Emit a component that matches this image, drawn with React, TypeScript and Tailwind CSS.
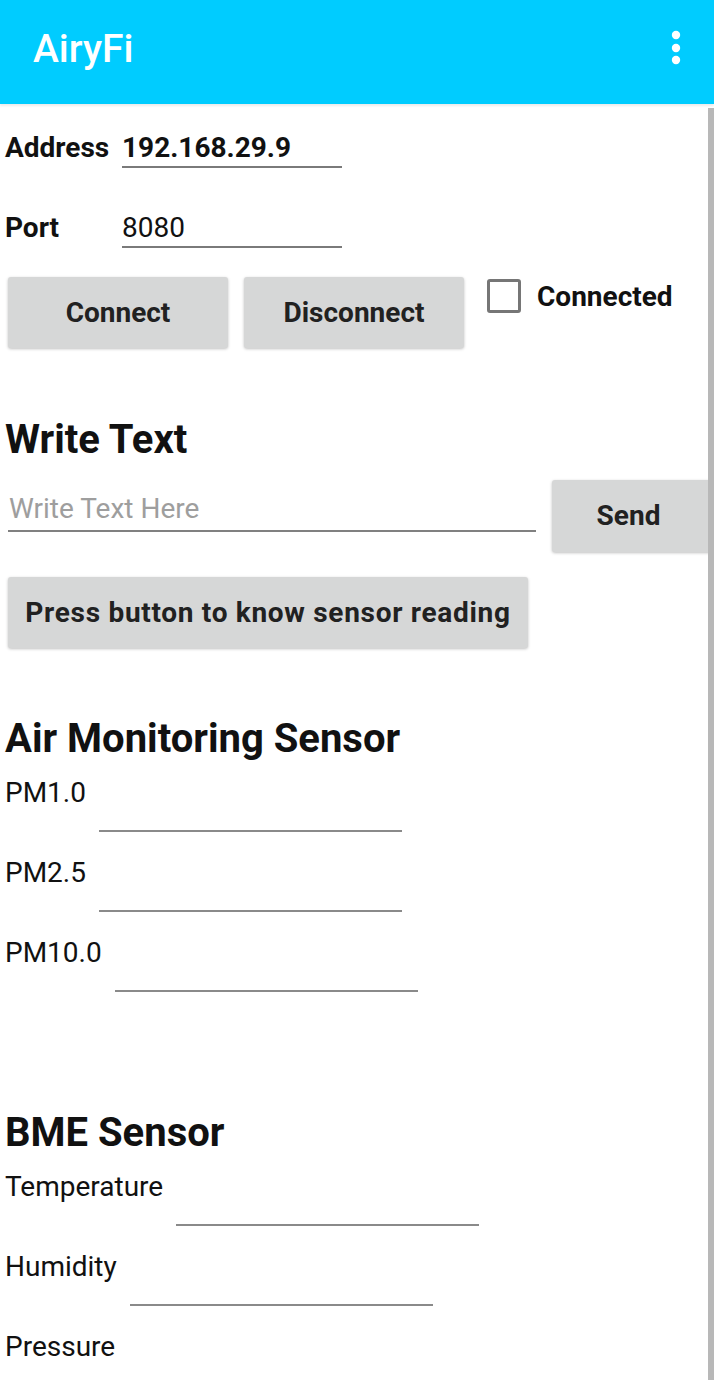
import type { ReactNode } from 'react';

function GrayButton({ children, className }: { children: ReactNode; className: string }) {
  return (
    <div
      className={`flex items-center justify-center rounded-[3px] bg-[#d6d7d7] text-[28px] font-bold text-[#212121] shadow-[0_1px_3px_rgba(0,0,0,0.25)] ${className}`}
    >
      {children}
    </div>
  );
}

function ReadingRow({ label, gap = 'ml-[13px]' }: { label: string; gap?: string }) {
  return (
    <div className="flex h-[55px] items-start">
      <span className="pl-[5px] text-[28px] leading-[32px] text-[#111]">{label}</span>
      <div className={`h-[55px] w-[303px] border-b-2 border-[#8a8a8a] ${gap}`} />
    </div>
  );
}

export default function App() {
  return (
    <div className="relative h-[1380px] overflow-hidden bg-white font-['Roboto',sans-serif]">
      <header className="flex h-[104px] items-start justify-between bg-[#00ccff] pl-[33px] pr-[33px] shadow-[0_2px_2px_rgba(0,0,0,0.08)]">
        <h1 className="pt-[27px] text-[39px] font-medium leading-[44px] text-white">AiryFi</h1>
        <svg width="10" height="36" viewBox="0 0 10 36" className="mt-[30px]" fill="white">
          <circle cx="5" cy="5" r="4.2" />
          <circle cx="5" cy="18" r="4.2" />
          <circle cx="5" cy="30" r="4.2" />
        </svg>
      </header>

      <main className="flex flex-col">
        <div className="mt-[28px] flex">
          <span className="w-[122px] pl-[5px] text-[28px] font-bold leading-[32px] text-[#111]">Address</span>
          <div className="h-[36px] w-[220px] border-b-2 border-[#7a7a7a] text-[28px] font-bold leading-[32px] text-[#111]">
            192.168.29.9
          </div>
        </div>

        <div className="mt-[44px] flex">
          <span className="w-[122px] pl-[5px] text-[28px] font-bold leading-[32px] text-[#111]">Port</span>
          <div className="h-[36px] w-[220px] border-b-2 border-[#7a7a7a] text-[28px] leading-[32px] text-[#111]">8080</div>
        </div>

        <div className="mt-[29px] flex items-start">
          <GrayButton className="ml-[8px] h-[71px] w-[220px]">Connect</GrayButton>
          <GrayButton className="ml-[16px] h-[71px] w-[220px]">Disconnect</GrayButton>
          <div className="ml-[23px] mt-[2px] h-[34px] w-[34px] rounded-[3px] border-[3px] border-[#767676]" />
          <span className="ml-[16px] mt-[4px] text-[28px] font-bold leading-[32px] text-[#111]">Connected</span>
        </div>

        <h2 className="mt-[69px] pl-[5px] text-[40px] font-bold leading-[46px] text-[#111]">Write Text</h2>

        <div className="mt-[17px] flex items-start">
          <div className="ml-[8px] h-[52px] w-[528px] border-b-2 border-[#808080] pl-[1px] pt-[13px] text-[28px] leading-[32px] text-[#9e9e9e]">
            Write Text Here
          </div>
          <GrayButton className="ml-[16px] h-[72px] w-[162px] pr-[9px]">Send</GrayButton>
        </div>

        <GrayButton className="ml-[8px] mt-[25px] h-[71px] w-[520px] tracking-[0.7px]">Press button to know sensor reading</GrayButton>

        <h2 className="mt-[68px] pl-[5px] text-[40px] font-bold leading-[46px] text-[#111]">Air Monitoring Sensor</h2>

        <div className="mt-[15px] flex flex-col gap-[25px]">
          <ReadingRow label="PM1.0" />
          <ReadingRow label="PM2.5" />
          <ReadingRow label="PM10.0" />
        </div>

        <h2 className="mt-[118px] pl-[5px] text-[40px] font-bold leading-[46px] text-[#111]">BME Sensor</h2>

        <div className="mt-[15px] flex flex-col gap-[25px]">
          <ReadingRow label="Temperature" />
          <ReadingRow label="Humidity" />
          <ReadingRow label="Pressure" />
        </div>
      </main>

      <div className="absolute bottom-0 right-0 top-[108px] w-[6px] bg-[#b8b8b8]" />
    </div>
  );
}
